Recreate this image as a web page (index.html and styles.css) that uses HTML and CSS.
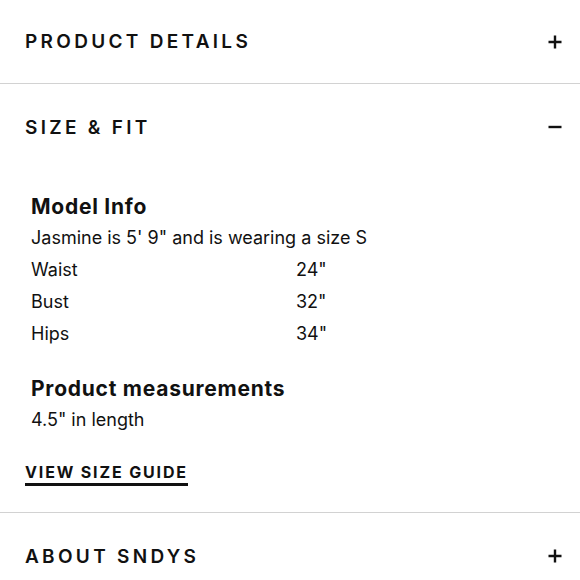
FILE: index.html
```html
<!DOCTYPE html>
<html lang="en">
<head>
<meta charset="utf-8">
<title>Product accordion</title>
<link rel="stylesheet" href="styles.css">
</head>
<body>
<div class="accordion">
  <section class="section">
    <div class="header header-first">
      <span class="title">PRODUCT DETAILS</span>
      <svg class="icon" width="14" height="14" viewBox="0 0 14 14"><path d="M7 0.5V13.5M0.5 7H13.5" stroke="#111" stroke-width="2.4" fill="none"/></svg>
    </div>
  </section>
  <section class="section">
    <div class="header">
      <span class="title">SIZE &amp; FIT</span>
      <svg class="icon" width="14" height="14" viewBox="0 0 14 14"><path d="M0.5 7H13.5" stroke="#111" stroke-width="2.4" fill="none"/></svg>
    </div>
    <div class="content">
      <h3 class="sub">Model Info</h3>
      <p class="line">Jasmine is 5' 9" and is wearing a size S</p>
      <div class="row"><span>Waist</span><span>24"</span></div>
      <div class="row"><span>Bust</span><span>32"</span></div>
      <div class="row"><span>Hips</span><span>34"</span></div>
      <h3 class="sub sub-gap">Product measurements</h3>
      <p class="line">4.5" in length</p>
      <a class="guide" href="#">VIEW SIZE GUIDE</a>
    </div>
  </section>
  <section class="section last">
    <div class="header">
      <span class="title">ABOUT SNDYS</span>
      <svg class="icon" width="14" height="14" viewBox="0 0 14 14"><path d="M7 0.5V13.5M0.5 7H13.5" stroke="#111" stroke-width="2.4" fill="none"/></svg>
    </div>
  </section>
</div>
</body>
</html>
```
FILE: styles.css
```css
* { box-sizing: border-box; }
html, body { margin: 0; padding: 0; background: #fff; }
body {
  font-family: Inter, "Noto Sans", sans-serif;
  color: #111;
  width: 580px;
}
.section { border-bottom: 1px solid #d2d2d2; }
.section.last { border-bottom: none; }
.header {
  height: 86px;
  display: flex;
  align-items: center;
  justify-content: space-between;
  padding: 0 18px 0 25px;
}
.header-first { height: 83px; }
.title {
  font-size: 19px;
  font-weight: 600;
  letter-spacing: 3.3px;
  line-height: 1;
}
.icon { display: block; }
.content {
  padding: 21px 0 26px 31px;
}
.sub {
  margin: 0;
  font-size: 21px;
  font-weight: 700;
  letter-spacing: 0.75px;
  line-height: 31px;
}
.sub-gap { margin-top: 23px; }
.line {
  margin: 0;
  font-size: 18px;
  line-height: 32px;
}
.row {
  display: grid;
  grid-template-columns: 265px 1fr;
  font-size: 18px;
  line-height: 32px;
}
.guide {
  display: inline-block;
  margin: 26px 0 0 -6px;
  font-size: 16px;
  font-weight: 700;
  letter-spacing: 1.85px;
  color: #111;
  text-decoration: none;
  line-height: 20px;
  border-bottom: 3px solid #111;
  padding-bottom: 1px;
}
```
